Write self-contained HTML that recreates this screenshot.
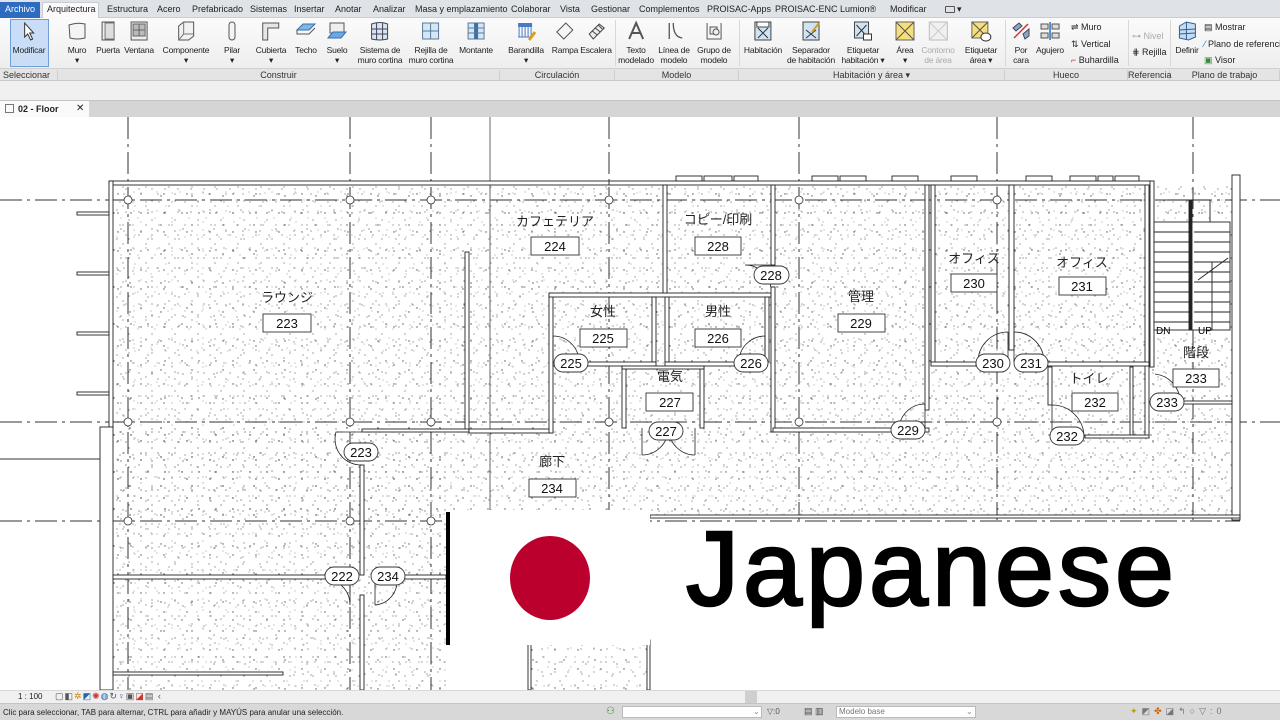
<!DOCTYPE html>
<html><head><meta charset="utf-8">
<style>
*{margin:0;padding:0;box-sizing:border-box}
body{width:1280px;height:720px;overflow:hidden;background:#fff;font-family:"Liberation Sans Narrow","Liberation Sans",sans-serif;position:relative;color:#222}
.abs{position:absolute}
#tabs{left:0;top:0;width:1280px;height:18px;background:#dfe2e6;border-bottom:1px solid #c9ccd0}
.t{position:absolute;top:4px;font-size:9px;color:#222;white-space:nowrap}
#ribbon{left:0;top:18px;width:1280px;height:50px;background:linear-gradient(#fbfbfb,#eeeeee)}
#plabels{left:0;top:68px;width:1280px;height:13px;background:#e4e4e4;border-top:1px solid #d0d0d0;border-bottom:1px solid #c8c8c8}
.pl{position:absolute;top:1px;font-size:9px;color:#333;text-align:center;border-right:1px solid #cfcfcf;height:11px}
.b{position:absolute;top:20px;font-size:8.5px;line-height:10px;text-align:center;transform:translateX(-50%);white-space:nowrap;color:#222;letter-spacing:-0.2px}
.b svg{display:block;margin:0 auto 3px auto}
.sm{position:absolute;font-size:9px;white-space:nowrap;color:#222}
.sep{position:absolute;top:20px;width:1px;height:46px;background:#d8d8d8}
</style></head><body>

<div id="tabs" class="abs">
 <div class="abs" style="left:0;top:2px;width:40px;height:16px;background:#2c6bbf"></div>
 <div class="t" style="left:5px;color:#fff">Archivo</div>
 <div class="abs" style="left:42px;top:2px;width:57px;height:17px;background:#fafafa;border:1px solid #c9ccd0;border-bottom:none"></div>
 <div class="t" style="left:47px">Arquitectura</div>
 <div class="t" style="left:107px">Estructura</div>
 <div class="t" style="left:157px">Acero</div>
 <div class="t" style="left:192px">Prefabricado</div>
 <div class="t" style="left:250px">Sistemas</div>
 <div class="t" style="left:294px">Insertar</div>
 <div class="t" style="left:335px">Anotar</div>
 <div class="t" style="left:373px">Analizar</div>
 <div class="t" style="left:415px">Masa y emplazamiento</div>
 <div class="t" style="left:511px">Colaborar</div>
 <div class="t" style="left:560px">Vista</div>
 <div class="t" style="left:591px">Gestionar</div>
 <div class="t" style="left:639px">Complementos</div>
 <div class="t" style="left:707px">PROISAC-Apps</div>
 <div class="t" style="left:775px">PROISAC-ENC</div>
 <div class="t" style="left:840px">Lumion®</div>
 <div class="t" style="left:890px">Modificar</div>
 <div class="abs" style="left:945px;top:6px;width:10px;height:7px;border:1px solid #555;border-radius:1px"></div>
 <div class="t" style="left:957px">▾</div>
</div>

<div id="ribbon" class="abs"></div>
<div class="abs" style="left:10px;top:19px;width:39px;height:48px;background:#c9def6;border:1px solid #6f9fd6"></div>
<div class="b" style="left:29px"><svg width="22" height="22"><path d="M7 3 L7 17 L10 14 L13 20 L15 19 L12 13 L16 13 Z" fill="#fff" stroke="#333" stroke-width="1"/></svg>Modificar</div>

<div class="b" style="left:77px"><svg width="22" height="22"><path d="M3 5 Q11 2 19 4 L19 18 Q11 20 4 18 Z" fill="#f4f4f4" stroke="#555"/></svg>Muro<br>▾</div>
<div class="b" style="left:108px"><svg width="22" height="22"><rect x="5" y="2" width="12" height="18" fill="#eee" stroke="#555"/><rect x="8" y="3" width="9" height="16" fill="#ddd" stroke="#777"/></svg>Puerta</div>
<div class="b" style="left:139px"><svg width="22" height="22"><rect x="3" y="2" width="16" height="18" fill="#eee" stroke="#555"/><path d="M5 4h12v12H5z M11 4v12 M5 10h12" fill="#bbb" stroke="#666"/></svg>Ventana</div>
<div class="b" style="left:186px"><svg width="22" height="22"><path d="M4 6 L9 2 L19 2 L19 16 L14 20 L4 20 Z" fill="#f2f2f2" stroke="#555"/><path d="M9 2v12h10 M9 14 L4 20" fill="none" stroke="#777"/></svg>Componente<br>▾</div>
<div class="b" style="left:232px"><svg width="22" height="22"><rect x="8" y="2" width="6" height="18" rx="3" fill="#f4f4f4" stroke="#555"/></svg>Pilar<br>▾</div>
<div class="b" style="left:271px"><svg width="22" height="22"><path d="M3 3h16v5H8v12H3z" fill="#e6e6e6" stroke="#555"/></svg>Cubierta<br>▾</div>
<div class="b" style="left:306px"><svg width="22" height="22"><path d="M2 10 L8 4 L20 4 L14 10 Z" fill="#7fb7e8" stroke="#3a6fa8"/><path d="M2 10v4h12l6-6" fill="none" stroke="#555"/></svg>Techo</div>
<div class="b" style="left:337px"><svg width="22" height="22"><path d="M4 3h14v10H4z" fill="#eee" stroke="#555"/><path d="M2 18 L7 12 L20 12 L15 18 Z" fill="#6aa9e6" stroke="#3a6fa8"/></svg>Suelo<br>▾</div>
<div class="b" style="left:380px"><svg width="22" height="22"><path d="M3 4 Q11 1 19 4 L19 19 Q11 21 3 19 Z" fill="#d8e6f3" stroke="#445"/><path d="M8 3v17 M14 3v17 M3 9h16 M3 14h16" stroke="#445" fill="none"/></svg>Sistema de<br>muro cortina</div>
<div class="b" style="left:431px"><svg width="22" height="22"><rect x="3" y="3" width="16" height="16" fill="#d5e6f5" stroke="#5a7a9a"/><path d="M11 3v16 M3 11h16" stroke="#5a7a9a"/></svg>Rejilla de<br>muro cortina</div>
<div class="b" style="left:476px"><svg width="22" height="22"><rect x="3" y="3" width="16" height="16" fill="#d5e6f5" stroke="#5a7a9a"/><rect x="9" y="3" width="4" height="16" fill="#3a6fa8"/><path d="M3 8h16M3 13h16" stroke="#5a7a9a"/></svg>Montante</div>
<div class="b" style="left:526px"><svg width="22" height="22"><rect x="3" y="3" width="14" height="4" fill="#4a7bc0"/><path d="M4 7v10 M7 7v10 M10 7v10 M13 7v10 M16 7v10 M3 17h14" stroke="#4a7bc0"/><path d="M14 20 L20 12" stroke="#d9a020" stroke-width="3"/></svg>Barandilla<br>▾</div>
<div class="b" style="left:565px"><svg width="22" height="22"><path d="M3 12 L12 3 L19 10 L10 19 Z" fill="#f5f5f5" stroke="#555"/></svg>Rampa</div>
<div class="b" style="left:596px"><svg width="22" height="22"><path d="M4 14 L10 8 L14 4 L19 8 L13 14 L8 19 Z" fill="#eee" stroke="#444"/><path d="M7 11l5 4 M10 8l5 4 M13 5l4 4" stroke="#444"/></svg>Escalera</div>
<div class="sep" style="left:615px"></div>
<div class="b" style="left:636px"><svg width="22" height="22"><path d="M4 19 L11 3 L18 19 M7 13h8" fill="none" stroke="#555" stroke-width="2"/></svg>Texto<br>modelado</div>
<div class="b" style="left:674px"><svg width="22" height="22"><path d="M6 3v16 M10 3 Q10 17 19 18" fill="none" stroke="#555" stroke-width="1.3"/></svg>Línea de<br>modelo</div>
<div class="b" style="left:714px"><svg width="22" height="22"><path d="M4 3v16h14V3" fill="none" stroke="#555"/><rect x="7" y="7" width="7" height="7" fill="#eee" stroke="#555"/><circle cx="13" cy="12" r="3" fill="#eee" stroke="#555"/></svg>Grupo de<br>modelo</div>
<div class="sep" style="left:739px"></div>
<div class="b" style="left:763px"><svg width="22" height="22"><rect x="3" y="2" width="16" height="18" fill="#cfe3f3" stroke="#444"/><path d="M6 8 L16 18 M16 8 L6 18" stroke="#333"/><rect x="5" y="2" width="12" height="5" fill="#fff" stroke="#444"/></svg>Habitación</div>
<div class="b" style="left:811px"><svg width="22" height="22"><rect x="3" y="2" width="16" height="18" fill="#cfe3f3" stroke="#444"/><path d="M6 10 L16 18 M16 10 L6 18" stroke="#333"/><path d="M12 12 L19 3" stroke="#d9a020" stroke-width="2"/></svg>Separador<br>de habitación</div>
<div class="b" style="left:863px"><svg width="22" height="22"><rect x="3" y="2" width="14" height="16" fill="#cfe3f3" stroke="#444"/><path d="M5 5 L15 16 M15 5 L5 16" stroke="#333"/><rect x="12" y="14" width="8" height="6" fill="#fff" stroke="#333"/></svg>Etiquetar<br>habitación ▾</div>
<div class="b" style="left:905px"><svg width="22" height="22"><rect x="2" y="2" width="18" height="18" fill="#f6de7a" stroke="#666"/><path d="M2 2 L20 20 M20 2 L2 20" stroke="#555"/></svg>Área<br>▾</div>
<div class="b" style="left:938px;color:#aaa"><svg width="22" height="22"><rect x="2" y="2" width="18" height="18" fill="#f0f0f0" stroke="#bbb"/><path d="M2 2 L20 20 M20 2 L2 20" stroke="#ccc"/></svg>Contorno<br>de área</div>
<div class="b" style="left:981px"><svg width="22" height="22"><rect x="2" y="2" width="16" height="16" fill="#f6de7a" stroke="#666"/><path d="M2 2 L18 18 M18 2 L2 18" stroke="#555"/><ellipse cx="16" cy="17" rx="5" ry="4" fill="#fff" stroke="#333"/></svg>Etiquetar<br>área ▾</div>
<div class="sep" style="left:1005px"></div>
<div class="b" style="left:1021px"><svg width="22" height="22"><path d="M3 8 L9 3 L12 6 L6 11 Z M13 14 L19 9 L19 16 L15 19 Z" fill="#8aa7c4" stroke="#445"/><path d="M4 18 L18 4" stroke="#c33" stroke-width="1.5"/></svg>Por<br>cara</div>
<div class="b" style="left:1050px"><svg width="22" height="22"><rect x="2" y="4" width="7" height="5" fill="#ddd" stroke="#555"/><rect x="13" y="4" width="7" height="5" fill="#ddd" stroke="#555"/><rect x="2" y="13" width="7" height="5" fill="#ddd" stroke="#555"/><rect x="13" y="13" width="7" height="5" fill="#ddd" stroke="#555"/><path d="M11 2v18" stroke="#2a6ec0" stroke-width="1.5"/></svg>Agujero</div>
<div class="sm" style="left:1071px;top:22px">⇌ Muro</div>
<div class="sm" style="left:1071px;top:39px">⇅ Vertical</div>
<div class="sm" style="left:1071px;top:55px"><span style="color:#c33">⌐</span> Buhardilla</div>
<div class="sep" style="left:1128px"></div>
<div class="sm" style="left:1132px;top:31px;color:#aaa">⊶ Nivel</div>
<div class="sm" style="left:1132px;top:47px">⋕ Rejilla</div>
<div class="sep" style="left:1170px"></div>
<div class="b" style="left:1187px"><svg width="22" height="22"><path d="M3 6 L10 2 L19 4 L19 17 L12 20 L3 18 Z" fill="#c8dcf0" stroke="#2a5f9a"/><path d="M10 2v18 M3 10l16 -1 M3 14l16 -1" stroke="#2a5f9a"/></svg>Definir</div>
<div class="sm" style="left:1204px;top:22px">▤ Mostrar</div>
<div class="sm" style="left:1204px;top:39px"><span style="color:#2a6ec0">⁄</span> Plano de referencia</div>
<div class="sm" style="left:1204px;top:55px"><span style="color:#3a8a3a">▣</span> Visor</div>

<div id="plabels" class="abs">
 <div class="pl" style="left:0;width:58px;text-align:left;padding-left:3px">Seleccionar ▾</div>
 <div class="pl" style="left:58px;width:442px">Construir</div>
 <div class="pl" style="left:500px;width:115px">Circulación</div>
 <div class="pl" style="left:615px;width:124px">Modelo</div>
 <div class="pl" style="left:739px;width:266px">Habitación y área ▾</div>
 <div class="pl" style="left:1005px;width:123px">Hueco</div>
 <div class="pl" style="left:1128px;width:42px">Referencia</div>
 <div class="pl" style="left:1170px;width:110px">Plano de trabajo</div>
</div>
<div class="abs" style="left:0;top:81px;width:1280px;height:19px;background:#f0f0f0"></div>
<div class="abs" style="left:0;top:100px;width:1280px;height:17px;background:#d5d5d5;border-top:1px solid #c4c4c4"></div>
<div class="abs" style="left:0;top:101px;width:89px;height:16px;background:#fafafa"></div>
<div class="abs" style="left:5px;top:104px;width:9px;height:9px;border:1px solid #777"></div>
<div class="sm" style="left:18px;top:104px;font-weight:bold;font-size:9px">02 - Floor</div>
<div class="sm" style="left:76px;top:103px;font-size:10px">✕</div>

<svg class="abs" style="left:0;top:117px" width="1280" height="573" viewBox="0 117 1280 573" font-family="Liberation Sans, Noto Sans CJK JP, sans-serif">
<defs>
 <pattern id="p1" width="23" height="19" patternUnits="userSpaceOnUse"><circle cx="3" cy="4" r=".7" fill="#555"/><circle cx="14" cy="11" r=".6" fill="#666"/><circle cx="19" cy="2" r=".5" fill="#777"/><circle cx="8" cy="16" r=".6" fill="#666"/></pattern>
 <pattern id="p2" width="31" height="29" patternUnits="userSpaceOnUse"><circle cx="6" cy="22" r=".7" fill="#555"/><circle cx="24" cy="7" r=".6" fill="#666"/><circle cx="17" cy="19" r=".5" fill="#777"/><circle cx="28" cy="26" r=".6" fill="#555"/><circle cx="11" cy="3" r=".5" fill="#777"/></pattern>
 <pattern id="p3" width="17" height="37" patternUnits="userSpaceOnUse"><circle cx="5" cy="9" r=".6" fill="#666"/><circle cx="12" cy="28" r=".7" fill="#555"/><circle cx="2" cy="33" r=".5" fill="#777"/><circle cx="15" cy="15" r=".5" fill="#777"/></pattern>
 <pattern id="p4" width="13" height="23" patternUnits="userSpaceOnUse"><circle cx="9" cy="5" r=".6" fill="#666"/><circle cx="3" cy="18" r=".6" fill="#777"/></pattern>
</defs>
<g id="fill">
 <rect x="113" y="185" width="1119" height="331" fill="url(#p1)"/><rect x="113" y="185" width="1119" height="331" fill="url(#p2)"/><rect x="113" y="185" width="1119" height="331" fill="url(#p3)"/><rect x="113" y="185" width="1119" height="331" fill="url(#p4)"/>
 <rect x="113" y="427" width="333" height="263" fill="url(#p1)"/><rect x="113" y="427" width="333" height="263" fill="url(#p2)"/><rect x="113" y="427" width="333" height="263" fill="url(#p3)"/><rect x="113" y="427" width="333" height="263" fill="url(#p4)"/>
 <rect x="530" y="640" width="120" height="50" fill="url(#p1)"/><rect x="530" y="640" width="120" height="50" fill="url(#p2)"/><rect x="530" y="640" width="120" height="50" fill="url(#p4)"/>
</g>
<g stroke="#333" stroke-width="1" fill="none" stroke-dasharray="22 5 3 5">
 <path d="M0 200H1280 M0 422H1280 M0 521H1240"/>
 <path d="M128 117V690 M350 117V690 M431 117V690 M609 117V520 M799 117V520 M997 117V520 M1193 117V520"/>
</g>
<path d="M490 117V510" stroke="#444" stroke-width="0.8"/>
<g stroke="#333" fill="#fff" stroke-width="0.8">
 <circle cx="128" cy="200" r="4"/><circle cx="350" cy="200" r="4"/><circle cx="431" cy="200" r="4"/><circle cx="609" cy="200" r="4"/><circle cx="799" cy="200" r="4"/><circle cx="997" cy="200" r="4"/>
 <circle cx="128" cy="422" r="4"/><circle cx="350" cy="422" r="4"/><circle cx="431" cy="422" r="4"/><circle cx="609" cy="422" r="4"/><circle cx="799" cy="422" r="4"/><circle cx="997" cy="422" r="4"/>
 <circle cx="128" cy="521" r="4"/><circle cx="350" cy="521" r="4"/><circle cx="431" cy="521" r="4"/>
</g>
<g fill="#fff" stroke="#222" stroke-width="0.9">
 <rect x="109" y="181" width="501" height="4"/><rect x="609" y="181" width="543" height="4"/>
 <rect x="676" y="176" width="26" height="5"/><rect x="704" y="176" width="28" height="5"/><rect x="734" y="176" width="24" height="5"/><rect x="812" y="176" width="26" height="5"/><rect x="840" y="176" width="26" height="5"/><rect x="892" y="176" width="26" height="5"/><rect x="951" y="176" width="26" height="5"/><rect x="1026" y="176" width="26" height="5"/><rect x="1070" y="176" width="26" height="5"/><rect x="1098" y="176" width="15" height="5"/><rect x="1115" y="176" width="24" height="5"/>
 <rect x="109" y="181" width="4" height="246"/><rect x="100" y="427" width="13" height="263"/>
 <rect x="77" y="212" width="32" height="3"/><rect x="77" y="272" width="32" height="3"/><rect x="77" y="332" width="32" height="3"/><rect x="77" y="392" width="32" height="3"/>
 <rect x="465" y="252" width="4" height="180"/>
 <rect x="362" y="429" width="107" height="3"/><rect x="469" y="429" width="84" height="4"/>
 <rect x="549" y="293" width="4" height="140"/><rect x="549" y="293" width="222" height="4"/>
 <rect x="663" y="185" width="4" height="108"/><rect x="652" y="297" width="4" height="65"/><rect x="665" y="297" width="4" height="65"/>
 <rect x="553" y="362" width="10" height="4"/><rect x="586" y="362" width="70" height="4"/><rect x="665" y="362" width="74" height="4"/>
 <rect x="622" y="366" width="4" height="62"/><rect x="700" y="366" width="4" height="62"/><rect x="622" y="366" width="82" height="3"/>
 <rect x="765" y="297" width="4" height="65"/>
 <rect x="771" y="185" width="4" height="80"/><rect x="771" y="287" width="4" height="145"/>
 <rect x="925" y="185" width="4" height="225"/><rect x="773" y="428" width="120" height="4"/><rect x="925" y="428" width="4" height="4"/>
 <rect x="931" y="185" width="4" height="180"/><rect x="1009" y="185" width="5" height="165"/><rect x="1145" y="185" width="4" height="252"/>
 <rect x="931" y="362" width="45" height="4"/><rect x="1045" y="362" width="104" height="4"/>
 <rect x="1048" y="367" width="4" height="38"/><rect x="1130" y="367" width="3" height="70"/><rect x="1085" y="435" width="64" height="3"/>
 <rect x="1150" y="181" width="4" height="186"/><rect x="1232" y="175" width="8" height="345"/>
 <rect x="1180" y="401" width="52" height="3"/>
 <rect x="650" y="515" width="590" height="3"/>
 <rect x="113" y="575" width="215" height="4"/><rect x="395" y="575" width="51" height="4"/><rect x="360" y="465" width="4" height="110"/><rect x="360" y="595" width="4" height="95"/><rect x="113" y="672" width="170" height="3"/>
 <rect x="528" y="640" width="3" height="50"/><rect x="647" y="640" width="3" height="50"/>
</g>
<path d="M0 459H100" stroke="#333" fill="none"/>
<g stroke="#222" fill="none" stroke-width="0.9">
 <rect x="1154" y="222" width="76" height="108" fill="#fff"/>
 <rect x="1189" y="200" width="3" height="130" fill="#222"/>
 <path d="M1168 200H1210V222"/>
 <path d="M1154 232H1189M1154 242H1189M1154 252H1189M1154 262H1189M1154 272H1189M1154 282H1189M1154 292H1189M1154 302H1189M1154 312H1189M1154 322H1189"/>
 <path d="M1194 232H1230M1194 242H1230M1194 252H1230M1194 262H1230M1194 272H1230M1194 282H1230M1194 292H1230M1194 302H1230M1194 312H1230M1194 322H1230"/>
 <path d="M1198 280 L1228 258 M1212 262V330"/>
</g>
<text x="1156" y="334" font-size="10">DN</text><text x="1198" y="334" font-size="10">UP</text>
<g stroke="#222" fill="none" stroke-width="0.8">
 <path d="M553 336 V362 M553 336 A26 26 0 0 1 579 362"/>
 <path d="M765 336 V362 M765 336 A26 26 0 0 0 739 362"/>
 <path d="M771 265 H745 A26 26 0 0 1 771 288"/>
 <path d="M642 428 V455 M642 455 A26 26 0 0 0 668 428 M695 428 V455 M695 455 A26 26 0 0 1 669 428"/>
 <path d="M925 404 V430 M925 404 A26 26 0 0 0 899 430"/>
 <path d="M978 362 A30 30 0 0 1 1008 332 V362 M1044 362 A30 30 0 0 0 1014 332 V362"/>
 <path d="M1052 405 V437 M1052 405 A32 32 0 0 1 1084 437"/>
 <path d="M1155 374 A28 28 0 0 1 1180 402"/>
 <path d="M362 432 H336 A26 26 0 0 0 362 465"/>
 <path d="M350 579 V605 M350 605 A26 26 0 0 0 328 579 M375 579 V605 M375 605 A24 24 0 0 0 397 579"/>
</g>
<g font-size="13" fill="#222" text-anchor="middle">
 <text x="287" y="302">ラウンジ</text><text x="555" y="226">カフェテリア</text><text x="718" y="224">コピー/印刷</text>
 <text x="603" y="316">女性</text><text x="718" y="316">男性</text><text x="670" y="381">電気</text>
 <text x="861" y="301">管理</text><text x="974" y="263">オフィス</text><text x="1082" y="267">オフィス</text>
 <text x="1089" y="383">トイレ</text><text x="1196" y="357">階段</text><text x="552" y="466">廊下</text>
</g>
<g fill="#fff" stroke="#333" stroke-width="0.9">
 <rect x="263" y="314" width="48" height="18"/><rect x="531" y="237" width="48" height="18"/><rect x="695" y="237" width="46" height="18"/>
 <rect x="580" y="329" width="47" height="18"/><rect x="695" y="329" width="46" height="18"/><rect x="646" y="393" width="47" height="18"/>
 <rect x="838" y="314" width="47" height="18"/><rect x="951" y="274" width="46" height="18"/><rect x="1059" y="277" width="47" height="18"/>
 <rect x="1072" y="393" width="46" height="18"/><rect x="1173" y="369" width="46" height="18"/><rect x="529" y="479" width="47" height="18"/>
</g>
<g fill="#fff" stroke="#333" stroke-width="0.9">
 <rect x="754" y="266" width="35" height="18" rx="9"/><rect x="554" y="354" width="34" height="18" rx="9"/><rect x="734" y="354" width="34" height="18" rx="9"/>
 <rect x="649" y="422" width="34" height="18" rx="9"/><rect x="891" y="421" width="34" height="18" rx="9"/><rect x="976" y="354" width="34" height="18" rx="9"/>
 <rect x="1014" y="354" width="34" height="18" rx="9"/><rect x="1050" y="427" width="34" height="18" rx="9"/><rect x="1150" y="393" width="34" height="18" rx="9"/>
 <rect x="344" y="443" width="34" height="18" rx="9"/><rect x="325" y="567" width="34" height="18" rx="9"/><rect x="371" y="567" width="34" height="18" rx="9"/>
</g>
<g font-size="13" fill="#111" text-anchor="middle">
 <text x="287" y="328">223</text><text x="555" y="251">224</text><text x="718" y="251">228</text><text x="603" y="343">225</text><text x="718" y="343">226</text>
 <text x="670" y="407">227</text><text x="861" y="328">229</text><text x="974" y="288">230</text><text x="1082" y="291">231</text><text x="1095" y="407">232</text>
 <text x="1196" y="383">233</text><text x="552" y="493">234</text>
 <text x="771" y="280">228</text><text x="571" y="368">225</text><text x="751" y="368">226</text><text x="666" y="436">227</text><text x="908" y="435">229</text>
 <text x="993" y="368">230</text><text x="1031" y="368">231</text><text x="1067" y="441">232</text><text x="1167" y="407">233</text>
 <text x="361" y="457">223</text><text x="342" y="581">222</text><text x="388" y="581">234</text>
</g>
<rect x="446" y="510" width="204" height="135" fill="#fff"/>
<rect x="446" y="512" width="4" height="133" fill="#000"/>
<ellipse cx="550" cy="578" rx="40" ry="42" fill="#bc002d"/>
<text x="686" y="605" font-size="106" font-weight="normal" fill="#000" stroke="#000" stroke-width="2.5" font-family="Liberation Sans, sans-serif" textLength="488" lengthAdjust="spacing">Japanese</text>
</svg>

<div class="abs" style="left:0;top:690px;width:1280px;height:13px;background:#f0f0f0;border-top:1px solid #d8d8d8"></div>
<div class="sm" style="left:18px;top:692px;font-size:8px">1 : 100</div>
<div class="sm" style="left:55px;top:691px;font-size:9px;letter-spacing:1px;color:#555">▢◧<span style="color:#c80">✲</span><span style="color:#26a">◩</span><span style="color:#c33">✺</span><span style="color:#26a">◍</span>↻<span style="color:#26a">♀</span>▣<span style="color:#c33">◪</span>▤ ‹</div>
<div class="abs" style="left:745px;top:691px;width:12px;height:12px;background:#cfcfcf"></div>
<div class="abs" style="left:0;top:703px;width:1280px;height:17px;background:#d8d8d8;border-top:1px solid #c4c4c4"></div>
<div class="sm" style="left:3px;top:708px;font-size:8px">Clic para seleccionar, TAB para alternar, CTRL para añadir y MAYÚS para anular una selección.</div>
<div class="sm" style="left:606px;top:706px;font-size:10px;color:#3a8a3a">⚇</div>
<div class="abs" style="left:622px;top:706px;width:140px;height:12px;background:#fff;border:1px solid #bbb"></div>
<div class="sm" style="left:753px;top:707px;font-size:8px;color:#888">⌄</div>
<div class="sm" style="left:767px;top:707px;font-size:8px;color:#555">▽:0</div>
<div class="sm" style="left:804px;top:706px;font-size:9px;color:#444">▤ ▥</div>
<div class="abs" style="left:836px;top:706px;width:140px;height:12px;background:#fff;border:1px solid #bbb"></div>
<div class="sm" style="left:839px;top:707px;font-size:8px;color:#777">Modelo base</div>
<div class="sm" style="left:966px;top:707px;font-size:8px;color:#888">⌄</div>
<div class="sm" style="left:1130px;top:706px;font-size:9px;letter-spacing:4px;color:#777"><span style="color:#c90">✦</span>◩<span style="color:#c60">✤</span>◪↰○▽:0</div>
</body></html>
